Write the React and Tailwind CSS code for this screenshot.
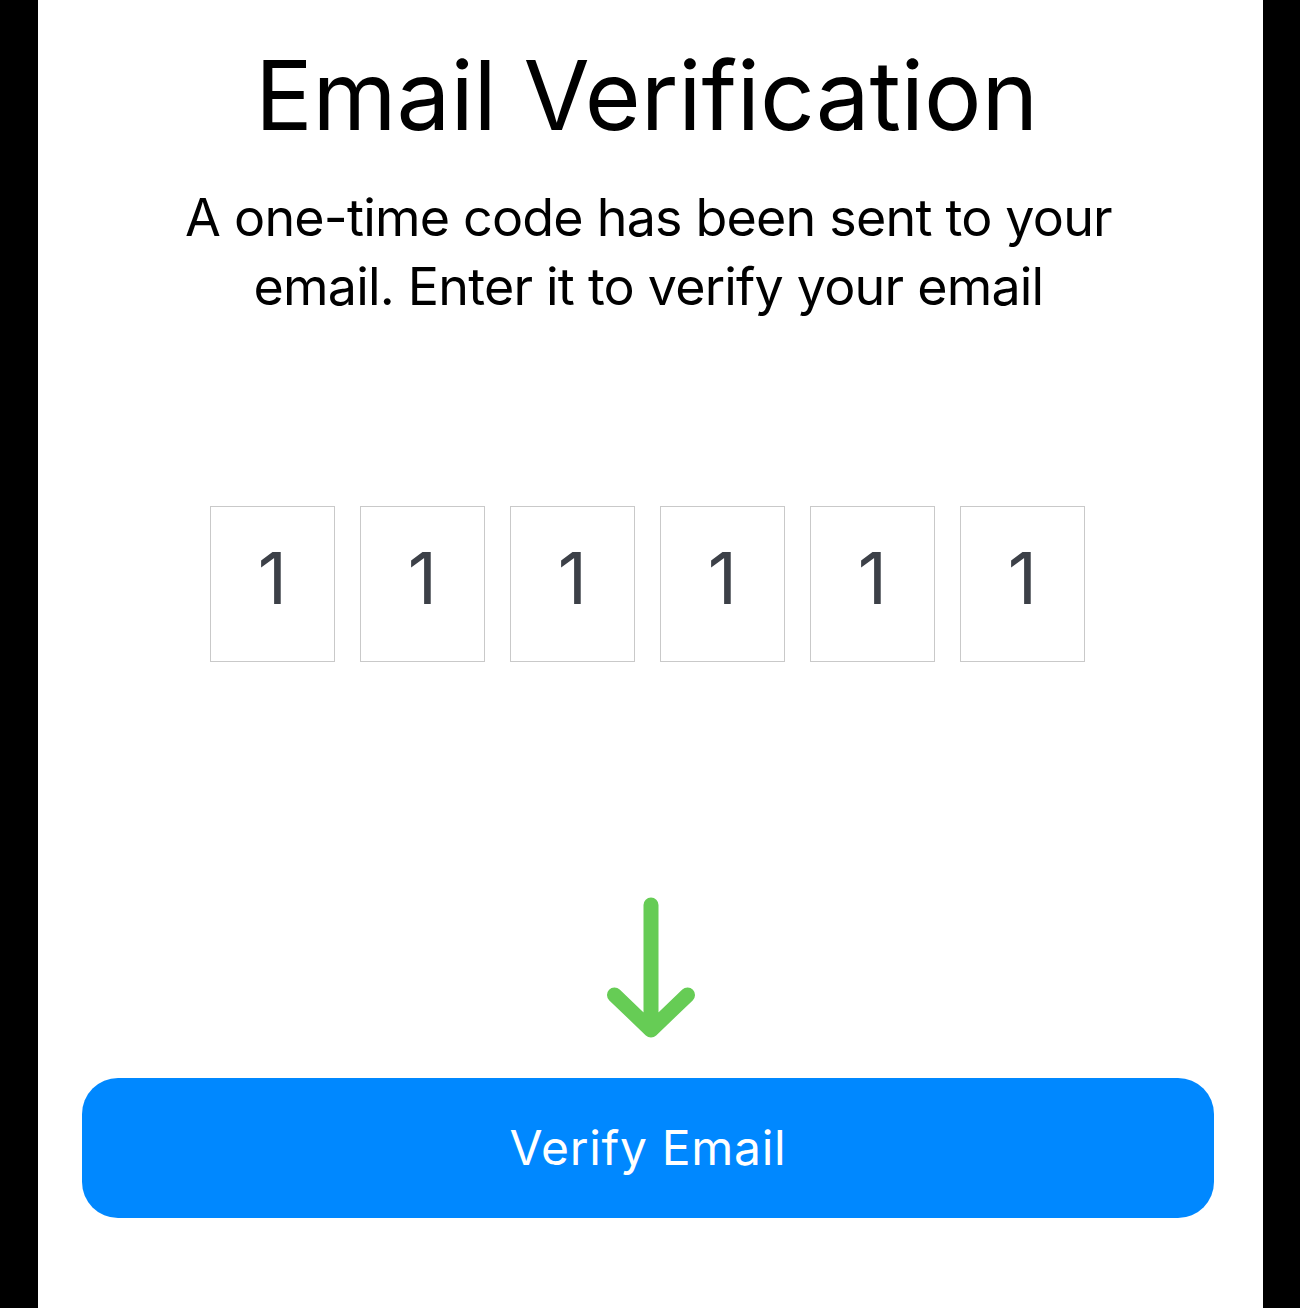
import React from "react";

const digits = ["1", "1", "1", "1", "1", "1"];

function DownArrow() {
  return (
    <svg width="100" height="160" viewBox="0 0 100 160" fill="none">
      <path
        d="M50 15 L50 138 M13.5 105 L50 140 L86.5 105"
        stroke="#66cc55"
        strokeWidth="15"
        strokeLinecap="round"
        strokeLinejoin="round"
      />
    </svg>
  );
}

export default function App() {
  return (
    <div
      className="flex min-h-[1308px] w-full bg-black pl-[38px] pr-[37px]"
      style={{ fontFamily: "Inter, 'Noto Sans', 'Liberation Sans', sans-serif" }}
    >
      <div className="flex flex-1 flex-col items-center bg-white">
        <h1 className="ml-[-8px] mt-[47px] text-[96px] font-normal leading-none tracking-[-0.1px] text-black">
          Email Verification
        </h1>
        <p className="ml-[-4px] mt-[40px] text-center text-[52px] leading-[69px] tracking-[-0.8px] text-black">
          A one-time code has been sent to your
          <br />
          email. Enter it to verify your email
        </p>

        <div className="ml-[-6px] mt-[185px] flex gap-[25px]">
          {digits.map((d, i) => (
            <div
              key={i}
              className="flex h-[156px] w-[125px] items-center justify-center border border-[#c9c9c9] pb-3 text-[72px] leading-none text-[#3c4047]"
            >
              {d}
            </div>
          ))}
        </div>

        <div className="mt-[228px]">
          <DownArrow />
        </div>

        <button className="ml-[-5px] mt-[28px] flex h-[140px] w-[1132px] items-center justify-center rounded-[36px] bg-[#0088ff] text-[48px] leading-none tracking-[0.7px] text-white">
          Verify Email
        </button>
      </div>
    </div>
  );
}
